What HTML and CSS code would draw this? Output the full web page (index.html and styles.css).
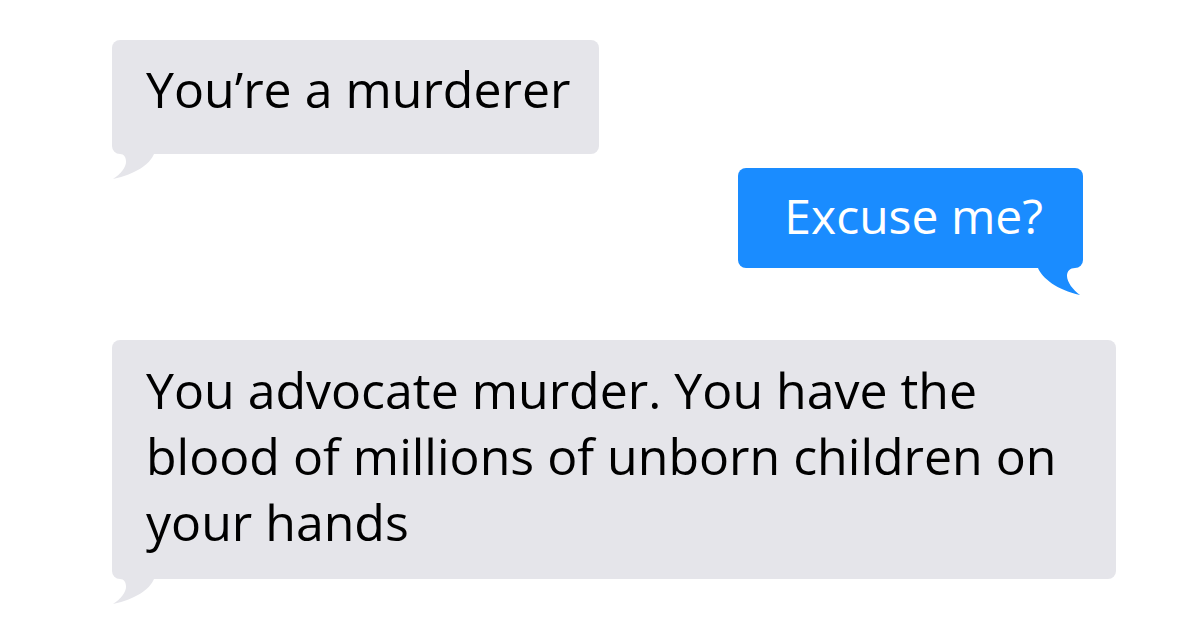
FILE: index.html
```html
<!DOCTYPE html>
<html lang="en">
<head>
    <meta charset="UTF-8">
    <meta name="viewport" content="width=device-width, initial-scale=1.0">
    <title>Messages</title>
    <link rel="stylesheet" href="styles.css">
</head>
<body>
    <div class="chat">
        <div class="bubble received first">
            You’re a murderer
            <svg class="tail" width="46" height="32" viewBox="0 -4 46 32">
                <path d="M42 0 C38 10 24 20 1 25 C9 20 14 13 14 8 C14 3 12 0 8 0 V-4 H42 Z"/>
            </svg>
        </div>
        <div class="bubble sent">
            Excuse me?
            <svg class="tail" width="46" height="32" viewBox="0 -4 46 32">
                <path d="M1 0 C5 10 20 22 43 27 C36 22 30 14 30 8 C30 3 33 0 38 0 V-4 H1 Z"/>
            </svg>
        </div>
        <div class="bubble received long">
            You advocate murder. You have the blood of millions of unborn children on your hands
            <svg class="tail" width="46" height="32" viewBox="0 -4 46 32">
                <path d="M42 0 C38 10 24 20 1 25 C9 20 14 13 14 8 C14 3 12 0 8 0 V-4 H42 Z"/>
            </svg>
        </div>
    </div>
</body>
</html>
```
FILE: styles.css
```css
body {
    font-family: "Open Sans", "Noto Sans", sans-serif;
    background-color: #fff;
    margin: 0;
    padding: 0;
    min-height: 630px;
}
.chat {
    display: flex;
    flex-direction: column;
    align-items: flex-start;
    width: 1004px;
    padding: 40px 0 51px 112px;
}
.bubble {
    position: relative;
    font-size: 50px;
    line-height: 66px;
    border-radius: 8px;
}
.bubble .tail {
    position: absolute;
    top: calc(100% - 4px);
    display: block;
}
.received {
    background-color: #e5e5ea;
    color: #000;
}
.received .tail {
    left: 0;
    fill: #e5e5ea;
}
.sent {
    background-color: #1a8cff;
    color: #fff;
    font-size: 48px;
    align-self: flex-end;
    margin: 14px 33px 0 0;
    padding: 15px 40px 19px 46px;
}
.sent .tail {
    right: 0;
    fill: #1a8cff;
}
.first {
    padding: 16px 29px 32px 34px;
}
.long {
    width: 936px;
    margin-top: 72px;
    padding: 17px 34px 24px 34px;
}
```
